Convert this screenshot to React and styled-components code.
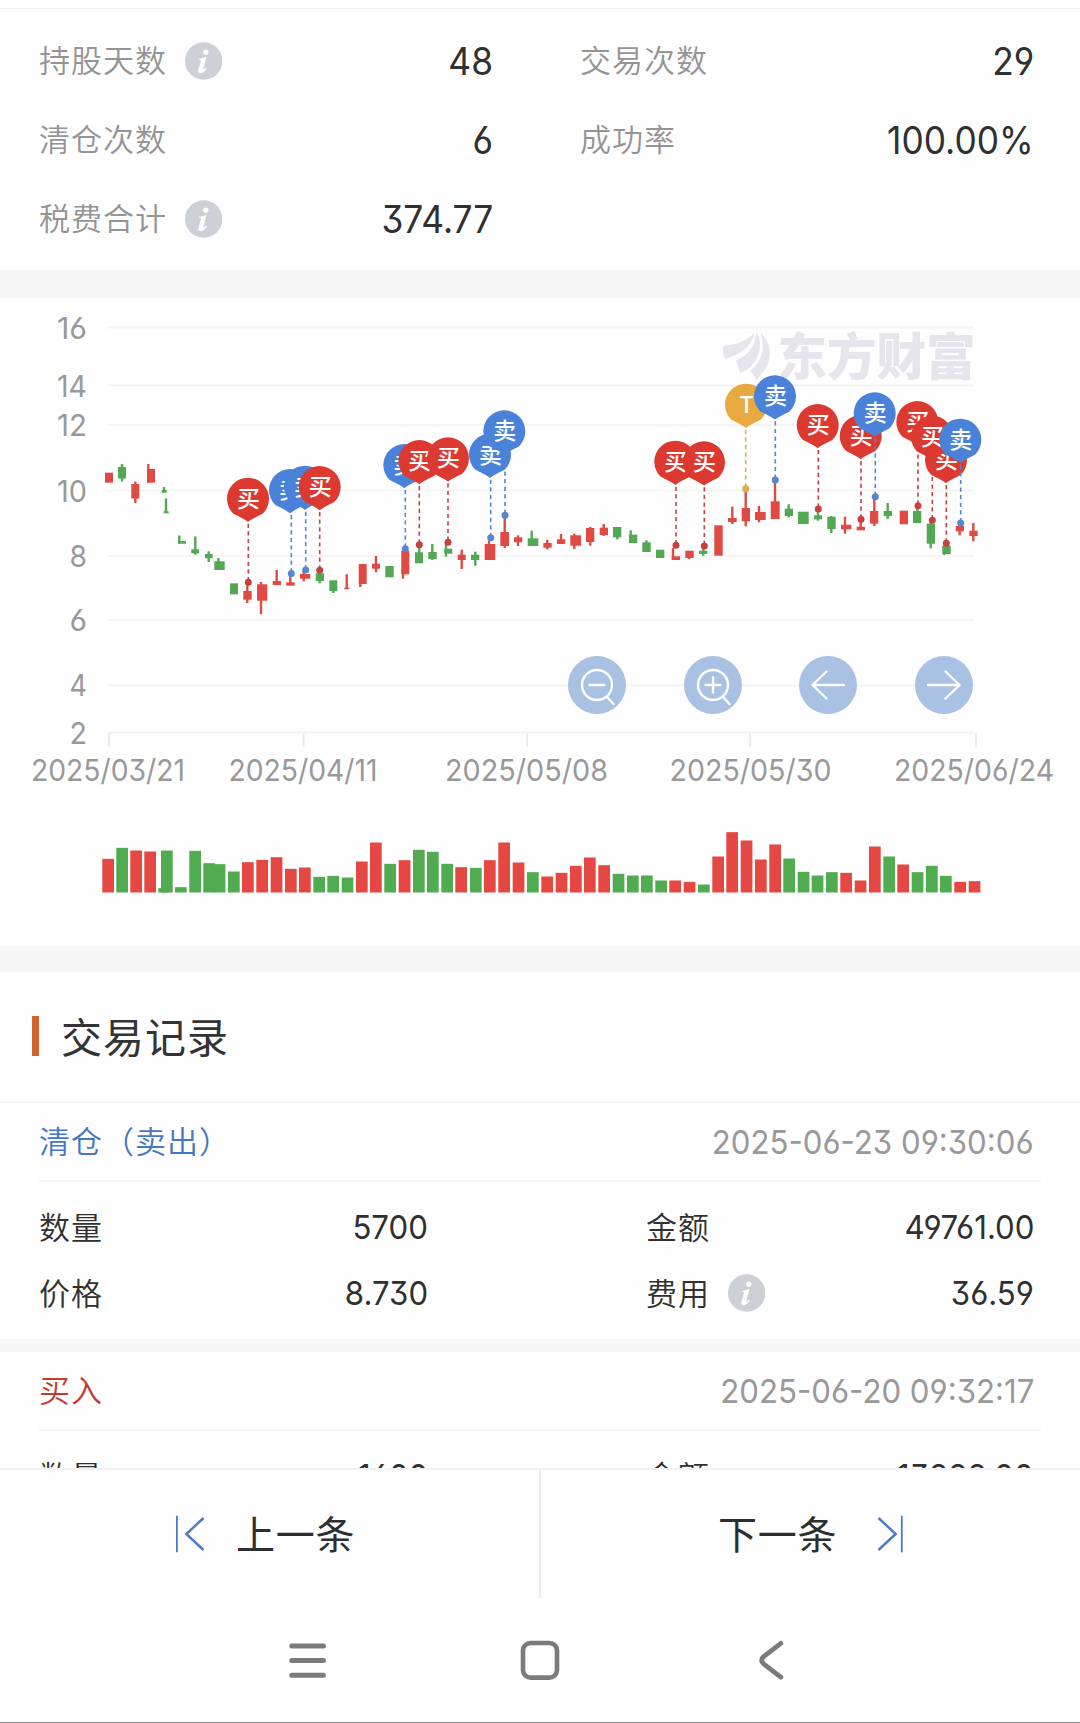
import React from 'react';
import styled, { createGlobalStyle } from 'styled-components';

const CJK = '"Noto Sans CJK SC"';
const NUM = `Inter, Roboto, ${CJK}, sans-serif`;

const GlobalStyle = createGlobalStyle`
  body {
    margin: 0;
    background: #fefefe;
    color: #333;
    font-family: ${CJK}, sans-serif;
  }
  * { box-sizing: border-box; }
`;

const Screen = styled.div`
  width: 1080px;
  height: 1723px;
  overflow: hidden;
  display: flex;
  flex-direction: column;
  border-bottom: 1px solid #8a8a8a;
`;

const Summary = styled.section`
  flex: none;
  height: 262px;
  margin-top: 8px;
  border-top: 1px solid #f0f0f0;
  padding: 12px 46px 0 39px;
  display: grid;
  grid-template-columns: 454px 454px;
  grid-auto-rows: 79px;
  column-gap: 87px;
`;

const Cell = styled.div`
  display: flex;
  align-items: center;
  justify-content: space-between;
`;

const Label = styled.span`
  display: flex;
  align-items: center;
  gap: 18px;
  color: ${(p) => p.$color || '#949494'};
  white-space: nowrap;
`;

const LabelText = styled.span`
  margin-bottom: 3px;
  font-size: 31px;
  line-height: 40px;
  letter-spacing: 1px;
  font-weight: 350;
`;

const Num = styled.span`
  font-family: ${NUM};
  font-feature-settings: 'cv03', 'cv04', 'cv09';
  font-size: ${(p) => (p.$large ? 38 : 33)}px;
  font-weight: 400;
  line-height: 40px;
  transform: scaleX(${(p) => (p.$large ? 0.93 : 0.945)});
  transform-origin: right center;
  color: ${(p) => p.$color || '#303030'};
  white-space: nowrap;
`;

const Band = styled.div`
  flex: none;
  height: ${(p) => p.$h}px;
  background: #f7f7f7;
`;

const ChartSection = styled.section`
  flex: none;
  position: relative;
  height: 648px;
`;

const ChartSvg = styled.svg`
  display: block;
  width: 1080px;
  height: 647px;
`;

const AxisText = styled.text`
  font-family: ${NUM};
  font-feature-settings: 'cv03', 'cv04', 'cv09';
  font-size: 30px;
  fill: #999;
`;

const BrandText = styled.text`
  font-family: ${CJK}, sans-serif;
  font-size: 50px;
  font-weight: 900;
  fill: #e5e5eb;
`;

const PinText = styled.text`
  font-family: ${CJK}, sans-serif;
  font-size: 23px;
  font-weight: 500;
  fill: #fff;
  text-anchor: middle;
`;

const Controls = styled.div`
  position: absolute;
  left: 568px;
  top: 358px;
  display: flex;
  gap: 57.6px;
`;

const RoundButton = styled.button`
  width: 58px;
  height: 58px;
  padding: 0;
  border: 0;
  border-radius: 50%;
  background: rgba(160, 186, 223, 0.9);
  svg { display: block; }
`;

const TitleRow = styled.div`
  flex: none;
  height: 131px;
  padding: 0 0 2px 32px;
  display: flex;
  align-items: center;
  gap: 22px;
  border-bottom: 2px solid #f4f4f4;
`;

const Title = styled.h2`
  margin: 0 0 2px;
  font-size: 41px;
  font-weight: 400;
  letter-spacing: 1px;
  line-height: 50px;
`;

const TitleMark = styled.i`
  width: 7px;
  height: 40px;
  background: #cf6430;
`;

const Records = styled.div`
  flex: none;
  height: 365px;
  overflow: hidden;
`;

const RecordHead = styled.div`
  height: 79px;
  margin: 0 39px;
  padding: 0 7px 0 0;
  display: flex;
  align-items: center;
  justify-content: space-between;
  border-bottom: 2px solid #f4f4f4;
`;

const RecordBody = styled.div`
  height: 157px;
  padding: 12px 46px 0 39px;
  display: grid;
  grid-template-columns: 389px 388px;
  grid-auto-rows: 66px;
  column-gap: 218px;
`;

const Pager = styled.div`
  flex: none;
  height: 130px;
  display: grid;
  grid-template-columns: 539px 541px;
  border-top: 2px solid #f2f2f2;
`;

const PageButton = styled.button`
  display: flex;
  align-items: center;
  gap: ${(p) => p.$gap}px;
  padding: 0 0 0 ${(p) => p.$left}px;
  border: 0;
  border-left: ${(p) => (p.$divided ? '2px solid #ececec' : '0')};
  background: none;
  color: #2e2e2e;
  font-family: inherit;
  font-size: 39px;
  letter-spacing: 0.8px;
  svg { display: block; }
  span { margin-bottom: 5px; }
`;

const NavBar = styled.nav`
  flex: 1;
  display: flex;
  align-items: flex-start;
  justify-content: center;
  gap: 191px;
  padding-top: 40px;
  svg { display: block; }
`;

const InfoIcon = () => (
  <svg width="37" height="38" viewBox="0 0 37 38">
    <circle cx="18.7" cy="19" r="18.7" fill="#cdd0d6" />
    <circle cx="20.8" cy="10.2" r="2.6" fill="#fff" />
    <path d="M14.2 16.8 C17 16.6 18.8 15.8 21.6 14.8 L18.2 27 C17.9 28.4 18.6 28.2 20.9 25.6 L21.8 26.4 C19 30.2 17 31.2 15.4 31.2 C13.2 31.2 13 29.4 13.5 27.6 L16 19 C16.3 18 15.9 17.8 14.1 17.8 Z" fill="#fff" />
  </svg>
);

const RED = '#df4a43';
const GREEN = '#52a853';
const VOL = { r: '#e54842', g: '#51ac51' };

// [color, left, right, open/close top, open/close bottom, wick x, wick top, wick bottom]
const candles = [
  ['r', 105, 113, 472.7, 482.7],
  ['g', 118, 126, 467, 478.5, 122, 464, 481.5],
  ['r', 131.3, 139.3, 484, 498.5, 135.3, 481.5, 503],
  ['r', 147, 155, 469, 482.7, 148.3, 464, 482.7],
  ['g', 161.7, 166.7, 490, 492.7, 164, 487, 492.7],
  ['g', 163.7, 168.7, 511.3, 513.3, 166, 498.5, 513],
  ['g', 178, 186, 541, 543.7, 179.3, 535.5, 543.7],
  ['g', 191.3, 199, 549.3, 553.3, 195.3, 536.5, 554.7],
  ['g', 205, 212.7, 554, 558.3, 208.7, 551.3, 562],
  ['g', 214.3, 224.7, 561.3, 570, 218.3, 558, 570],
  ['g', 230, 238, 583.3, 594.3],
  ['r', 243.3, 251.7, 591, 599.7, 247.3, 582, 603],
  ['r', 257, 267.3, 584.3, 600.7, 261, 582, 614.3],
  ['r', 272.7, 281, 581, 585, 276.7, 570, 585],
  ['r', 286.3, 294.7, 582.3, 585.7, 290.3, 573, 585],
  ['r', 300, 310.3, 574, 578.7, 303.7, 570, 581.3],
  ['g', 315.7, 324, 573.3, 581, 319.7, 570, 583.3],
  ['g', 329.3, 337.3, 580.3, 591, 333.3, 581, 593],
  ['r', 344.3, 349.3, 587.7, 589.3, 346.7, 574.3, 589],
  ['r', 358.7, 366.7, 564, 584, 360.3, 564, 587],
  ['r', 372, 380, 563.7, 568.7, 376, 556, 572.3],
  ['g', 385.3, 393.7, 566, 577.3],
  ['r', 401.3, 409.3, 550.7, 574.3, 403, 551, 578.7],
  ['g', 415, 423, 552.3, 563.3, 419.3, 546, 563],
  ['g', 428.3, 436.7, 552, 559, 432.3, 544, 560],
  ['g', 444.3, 452.3, 548.7, 553.7, 446, 543, 556.7],
  ['r', 457.7, 465.7, 554.7, 560, 461.7, 549.7, 569],
  ['g', 471, 479.3, 554.7, 560, 475.3, 551.7, 565.7],
  ['r', 484.7, 495.3, 544, 560, 489, 540.7, 560],
  ['r', 500.3, 509, 532, 546, 504.7, 516, 548],
  ['r', 514, 522.3, 537.3, 542.3, 518, 535.3, 546],
  ['g', 527.7, 538.3, 538.3, 546, 531.7, 530.7, 546],
  ['r', 543.3, 551.7, 543, 547.7, 547.3, 539.7, 549.3],
  ['r', 557, 565.3, 539.3, 544, 561, 534, 544],
  ['r', 570.3, 581, 535.3, 545.7, 574.3, 533.7, 549],
  ['r', 586, 594.3, 528, 542, 590.3, 527, 545.7],
  ['r', 599.7, 608, 527.7, 535, 603.7, 524, 536],
  ['g', 613, 621.3, 527, 537.3, 617.3, 527, 539.3],
  ['g', 629, 637.3, 534.7, 543, 630.7, 530.3, 543],
  ['g', 642.3, 650.7, 542.3, 552, 646.3, 540.3, 552],
  ['g', 656, 664.3, 549.7, 558],
  ['r', 671.7, 680, 556.3, 560, 673, 548, 560],
  ['r', 685.3, 693.7, 550.7, 558, 689.3, 551, 559],
  ['g', 699, 707.3, 550.7, 554, 703.3, 548, 555.7],
  ['r', 714.3, 722.7, 525.3, 555.7],
  ['r', 728, 736.7, 518, 522, 732.3, 506.7, 524],
  ['r', 741.7, 750, 508, 521.3, 745.7, 491.7, 526.3],
  ['r', 755, 765.7, 512, 520, 759, 506, 522.3],
  ['r', 770.7, 779.7, 501.3, 519, 775, 481.7, 519],
  ['g', 784.7, 793, 508.7, 516, 788.7, 504.3, 517.3],
  ['g', 798, 808.7, 511.7, 524],
  ['g', 814, 822, 515.3, 519.3, 818, 508, 520.7],
  ['g', 827.3, 835.7, 516.7, 529, 831.3, 516, 533],
  ['r', 841, 851.3, 524.7, 529.3, 845, 516.7, 533.7],
  ['r', 856.7, 865, 526.7, 530.3, 860.7, 520, 530],
  ['r', 870, 878.3, 511, 523.7, 874.3, 499.3, 526],
  ['g', 883.7, 892, 511, 516, 887.7, 503, 519],
  ['r', 899.7, 908, 510.7, 524.3],
  ['g', 913, 921.3, 511, 523, 917.3, 506.7, 523],
  ['g', 926.7, 935, 523.7, 543.7, 930.7, 523, 548.3],
  ['g', 942.3, 950.7, 545.7, 554, 944.3, 546, 555],
  ['r', 955.7, 964, 526, 531.3, 959.7, 524, 535.3],
  ['r', 969.3, 977.7, 530.7, 536, 973.3, 523, 541.3],
];

const PIN = {
  buy: { text: '买', fill: '#dc3a31', line: '#c5433f' },
  sell: { text: '卖', fill: '#4a81d9', line: '#5586cf' },
  both: { text: 'T', fill: '#e7a940', line: '#e0ab4d' },
};

// [kind, pin centre x, pin top, dot x, dot y]
const pins = [
  ['buy', 248, 477.7, 248.3, 582.3],
  ['sell', 290, 469, 291.3, 573.5],
  ['sell', 305, 465.7, 305.7, 570],
  ['buy', 319.7, 466, 319.7, 570.3],
  ['sell', 404.3, 444, 405.3, 548.7],
  ['buy', 419.3, 440, 419.3, 544.7],
  ['buy', 448, 437.3, 448, 542.3],
  ['sell', 490, 433.7, 490.7, 537.7],
  ['sell', 504.3, 410.3, 505, 515.3],
  ['buy', 675.3, 440.7, 676, 545.3],
  ['buy', 704, 441.3, 704.3, 546],
  ['both', 746, 383.7, 745.7, 488.7],
  ['sell', 775, 375.3, 775.3, 480],
  ['buy', 817.7, 404, 818.3, 509],
  ['buy', 860.7, 415, 861, 519.3],
  ['sell', 874.7, 392.3, 875.3, 496.7],
  ['buy', 917.3, 401, 918, 505.7],
  ['buy', 946, 439, 946.3, 543.3],
  ['buy', 932, 415.7, 932.3, 520.3],
  ['sell', 960.3, 418.7, 960.7, 523],
];

// [color, left, volume]
const volumes = [
  ['r', 102.3, 101], ['g', 116.3, 134], ['r', 130.3, 126], ['r', 144.3, 123],
  ['g', 158.3, 13], ['g', 161, 126], ['g', 175, 16], ['g', 189.3, 125],
  ['g', 203.3, 88], ['g', 213.7, 85], ['g', 228, 63], ['r', 242, 91],
  ['r', 256.3, 98], ['r', 270.7, 106], ['r', 285, 71], ['r', 299, 75],
  ['g', 313.3, 47], ['g', 327.3, 50], ['g', 341.7, 45], ['r', 356, 93],
  ['r', 370, 150], ['g', 384.3, 86], ['r', 398.7, 97], ['g', 413, 128],
  ['g', 427, 122], ['g', 441.3, 86], ['r', 455.3, 76], ['g', 470, 74],
  ['r', 484, 97], ['r', 498.3, 150], ['r', 512.7, 90], ['g', 527, 61],
  ['r', 541.3, 48], ['r', 555.7, 59], ['r', 570, 80], ['r', 584, 105],
  ['r', 598.3, 82], ['g', 612.7, 56], ['g', 627, 51], ['g', 641, 51],
  ['g', 655.3, 36], ['r', 669.3, 36], ['r', 683.7, 32], ['g', 698, 24],
  ['r', 712.3, 108], ['r', 726.3, 181], ['r', 740.7, 156], ['r', 755, 99],
  ['r', 769.3, 144], ['g', 783.3, 102], ['g', 797.7, 62], ['g', 811.7, 51],
  ['g', 826, 61], ['r', 840.3, 59], ['r', 854.7, 36], ['r', 869, 138],
  ['g', 883.3, 108], ['r', 897.3, 84], ['g', 911.7, 61], ['g', 926, 80],
  ['g', 940, 50], ['r', 954.3, 32], ['r', 968.7, 34],
];
const VOLUME_BASE = 892.5;

const yTicks = [
  [16, 327.5], [14, 385.5], [12, 425], [10, 490.5], [8, 556], [6, 620], [4, 685.3], [2, 732.5],
];
const xTicks = [
  ['2025/03/21', 109, 31, 154],
  ['2025/04/11', 303.5, 228.5, 149],
  ['2025/05/08', 527, 445, 163],
  ['2025/05/30', 750, 669.5, 162],
  ['2025/06/24', 976, 894, 160],
];

function Pin({ kind, x, top, dotX, dotY }) {
  const style = PIN[kind];
  return (
    <g>
      <line x1={dotX} x2={dotX} y1={top + 46} y2={dotY} stroke={style.line} strokeWidth="1.6" strokeDasharray="4.2 3.4" />
      <circle cx={dotX} cy={dotY} r="3.5" fill={style.line} />
      <g transform={`translate(${x} ${top + 21})`}>
        <path d="M0 23.2 Q-3.5 20.5 -14.6 15.1 A21 21 0 1 1 14.6 15.1 Q3.5 20.5 0 23.2 Z" fill={style.fill} />
        <PinText y="8" x="0.5">{style.text}</PinText>
      </g>
    </g>
  );
}

function Chart() {
  return (
    <ChartSvg viewBox="0 298 1080 647">
      {yTicks.map(([value, y]) => (
        <g key={value}>
          <line x1="108" x2="974" y1={y} y2={y} stroke="#f4f4f4" strokeWidth="2" />
          <AxisText x="87" y={y + 11} textAnchor="end" textLength={value > 9 ? 30 : 17.5} lengthAdjust="spacingAndGlyphs">{value}</AxisText>
        </g>
      ))}
      {xTicks.map(([date, x, left, width]) => (
        <g key={date}>
          <line x1={x} x2={x} y1="733" y2="747" stroke="#ededed" strokeWidth="2" />
          <AxisText x={left} y="780.7" textLength={width} lengthAdjust="spacingAndGlyphs">{date}</AxisText>
        </g>
      ))}
      <g transform="translate(640 320) scale(0.3333)" fill="#e5e5eb">
        <path d="M250 78 C285 74 318 66 343 38 C336 76 310 102 254 116 C249 104 248 90 250 78 Z" />
        <path d="M287 122 C328 102 346 78 350 35 C372 74 358 136 300 160 C298 146 293 133 287 122 Z" />
        <path d="M361 38 C396 72 400 118 368 158 L348 182 C345 170 339 160 331 152 C368 122 377 84 361 38 Z" />
      </g>
      <BrandText x="777.5" y="375" textLength="198" lengthAdjust="spacingAndGlyphs">东方财富</BrandText>
      {candles.map(([c, l, r, t, b, wx, wt, wb]) => (
        <g key={l} fill={c === 'r' ? RED : GREEN}>
          <rect x={l} y={t} width={r - l} height={b - t} />
          {wx && <rect x={wx - 1.2} y={wt} width="2.4" height={wb - wt} />}
        </g>
      ))}
      {pins.map(([kind, x, top, dotX, dotY]) => (
        <Pin key={x} kind={kind} x={x} top={top} dotX={dotX} dotY={dotY} />
      ))}
      {volumes.map(([c, x, v]) => (
        <rect key={x} x={x} y={VOLUME_BASE - v / 3} width="11.7" height={v / 3} fill={VOL[c]} />
      ))}
    </ChartSvg>
  );
}

const controls = [
  { name: '缩小', lens: true, path: 'M-7.5 0H7.5M9.8 11.8L16.5 19' },
  { name: '放大', lens: true, path: 'M-7.5 0H7.5M0 -7.5V7.5M9.8 11.8L16.5 19' },
  { name: '左移', path: 'M16 0H-15.5M-1.5 -13.5L-15.5 0L-1.5 13.5' },
  { name: '右移', path: 'M-16 0H15.5M1.5 -13.5L15.5 0L1.5 13.5' },
];

function ControlButton({ name, lens, path }) {
  return (
    <RoundButton aria-label={name}>
      <svg width="58" height="58" viewBox="-29 -29 58 58" fill="none" stroke="#fff" strokeWidth="2.4" strokeLinecap="round" strokeLinejoin="round">
        {lens && <circle r="15" />}
        <path d={path} />
      </svg>
    </RoundButton>
  );
}

const summary = [
  { label: '持股天数', value: '48', info: true },
  { label: '交易次数', value: '29' },
  { label: '清仓次数', value: '6' },
  { label: '成功率', value: '100.00%' },
  { label: '税费合计', value: '374.77', info: true },
];

const records = [
  {
    kind: '清仓（卖出）',
    color: '#4677c0',
    time: '2025-06-23 09:30:06',
    fields: [['数量', '5700'], ['金额', '49761.00'], ['价格', '8.730'], ['费用', '36.59', true]],
  },
  {
    kind: '买入',
    color: '#c23c33',
    time: '2025-06-20 09:32:17',
    fields: [['数量', '1600'], ['金额', '13888.00']],
  },
];

export default function App() {
  return (
    <>
      <GlobalStyle />
      <Screen>
        <Summary>
          {summary.map((s) => (
            <Cell key={s.label}>
              <Label><LabelText>{s.label}</LabelText>{s.info && <InfoIcon />}</Label>
              <Num $large>{s.value}</Num>
            </Cell>
          ))}
        </Summary>
        <Band $h={28} />
        <ChartSection>
          <Chart />
          <Controls>
            {controls.map((c) => <ControlButton key={c.name} {...c} />)}
          </Controls>
        </ChartSection>
        <Band $h={26} />
        <TitleRow><TitleMark /><Title>交易记录</Title></TitleRow>
        <Records>
          {records.map((r, i) => (
            <React.Fragment key={r.kind}>
              {i > 0 && <Band $h={13} />}
              <RecordHead>
                <Label $color={r.color}><LabelText>{r.kind}</LabelText></Label>
                <Num $color="#999">{r.time}</Num>
              </RecordHead>
              <RecordBody>
                {r.fields.map(([label, value, info]) => (
                  <Cell key={label}>
                    <Label $color="#303030"><LabelText>{label}</LabelText>{info && <InfoIcon />}</Label>
                    <Num>{value}</Num>
                  </Cell>
                ))}
              </RecordBody>
            </React.Fragment>
          ))}
        </Records>
        <Pager>
          <PageButton $left={176} $gap={31}>
            <svg width="29" height="38" viewBox="0 0 29 38" fill="none" stroke="#4a7bc8">
              <path d="M0.9 0.7V37.3" strokeWidth="1.8" />
              <path d="M27.5 3L10.3 19L27.5 35" strokeWidth="2.4" />
            </svg>
            <span>上一条</span>
          </PageButton>
          <PageButton $left={177} $gap={40} $divided>
            <span>下一条</span>
            <svg width="29" height="38" viewBox="0 0 29 38" fill="none" stroke="#4a7bc8">
              <path d="M24.8 0.7V37.3" strokeWidth="1.8" />
              <path d="M1.5 3L18.7 19L1.5 35" strokeWidth="2.4" />
            </svg>
          </PageButton>
        </Pager>
        <NavBar>
          <svg width="40" height="44" viewBox="0 0 40 44" stroke="#7b7b7b" strokeWidth="5" strokeLinecap="round">
            <path d="M2.8 8H34.4M2.8 22.5H34.4M2.8 37.2H34.4" />
          </svg>
          <svg width="40" height="44" viewBox="0 0 40 44" fill="none" stroke="#7b7b7b" strokeWidth="4.6">
            <rect x="3" y="5" width="34" height="34.6" rx="7.5" />
          </svg>
          <svg width="40" height="44" viewBox="0 0 40 44" fill="none" stroke="#7b7b7b" strokeWidth="4.8" strokeLinecap="round" strokeLinejoin="round">
            <path d="M29.8 5.4L12.6 18.6Q8.6 22.2 12.6 25.8L29.8 39.2" />
          </svg>
        </NavBar>
      </Screen>
    </>
  );
}
